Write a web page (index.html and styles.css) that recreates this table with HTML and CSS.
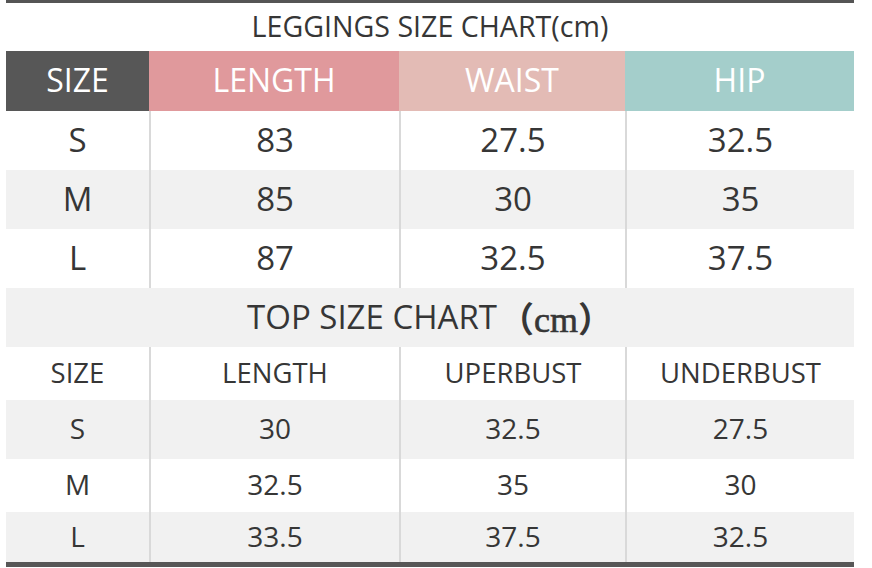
FILE: index.html
```html
<!DOCTYPE html>
<html lang="en">
<head>
<meta charset="utf-8">
<title>Leggings Size Chart</title>
<link rel="stylesheet" href="styles.css">
</head>
<body>
<div class="chart">
  <div class="title">LEGGINGS SIZE CHART(cm)</div>
  <div class="row head">
    <div class="cell c-size">SIZE</div>
    <div class="cell c-length">LENGTH</div>
    <div class="cell c-waist">WAIST</div>
    <div class="cell c-hip">HIP</div>
  </div>
  <div class="row big r1">
    <div class="cell">S</div><div class="cell">83</div><div class="cell">27.5</div><div class="cell">32.5</div>
  </div>
  <div class="row big r2 alt">
    <div class="cell">M</div><div class="cell">85</div><div class="cell">30</div><div class="cell">35</div>
  </div>
  <div class="row big r3">
    <div class="cell">L</div><div class="cell">87</div><div class="cell">32.5</div><div class="cell">37.5</div>
  </div>
  <div class="subtitle">TOP SIZE CHART <span class="unit">（<span class="cm">cm</span>）</span></div>
  <div class="row small s0">
    <div class="cell">SIZE</div><div class="cell">LENGTH</div><div class="cell">UPERBUST</div><div class="cell">UNDERBUST</div>
  </div>
  <div class="row small s1 alt">
    <div class="cell">S</div><div class="cell">30</div><div class="cell">32.5</div><div class="cell">27.5</div>
  </div>
  <div class="row small s2">
    <div class="cell">M</div><div class="cell">32.5</div><div class="cell">35</div><div class="cell">30</div>
  </div>
  <div class="row small s3 alt">
    <div class="cell">L</div><div class="cell">33.5</div><div class="cell">37.5</div><div class="cell">32.5</div>
  </div>
</div>
</body>
</html>
```
FILE: styles.css
```css
html, body {
  margin: 0;
  padding: 0;
  background: #ffffff;
}

body {
  font-family: "Open Sans", "Noto Sans", "Noto Sans CJK SC", sans-serif;
  color: #363636;
}

.chart {
  width: 848px;
  margin: 0 6px;
  border-top: 3px solid #555555;
  border-bottom: 5px solid #575757;
}

.title {
  height: 48px;
  display: flex;
  align-items: center;
  justify-content: center;
  font-size: 28.6px;
  padding-bottom: 4px;
  box-sizing: border-box;
}

.row {
  display: grid;
  grid-template-columns: 143px 250px 226px 229px;
}

.cell {
  display: flex;
  align-items: center;
  justify-content: center;
  padding-bottom: 3px;
  box-sizing: border-box;
}

.row .cell + .cell {
  border-left: 2px solid #d9d9d9;
}

.head {
  height: 60px;
  font-size: 32px;
  color: #ffffff;
}

.head .cell + .cell {
  border-left: none;
}

.c-size { background: #575757; }
.c-length { background: #e0999c; }
.c-waist { background: #e3bbb5; }
.c-hip { background: #a4cecb; }

.big {
  font-size: 33px;
}

.r1 { height: 59px; }
.r2 { height: 59px; }
.r3 { height: 59px; }

.alt {
  background: #f1f1f1;
}

.subtitle {
  height: 59px;
  background: #f1f1f1;
  display: flex;
  align-items: center;
  justify-content: center;
  font-size: 33px;
  padding-bottom: 3px;
  box-sizing: border-box;
}

.unit {
  font-family: "Noto Sans CJK SC", sans-serif;
  font-weight: 700;
  font-size: 35px;
  margin-left: 2px;
}

.cm {
  font-family: "Liberation Serif", serif;
  font-weight: 400;
  font-size: 36px;
  -webkit-text-stroke: 0.6px #363636;
}

.small {
  font-size: 28px;
}

.s0 { height: 53px; }
.s0 .cell { font-size: 27.5px; }
.s1 { height: 59px; }
.s2 { height: 53px; }
.s3 { height: 50px; }
```
